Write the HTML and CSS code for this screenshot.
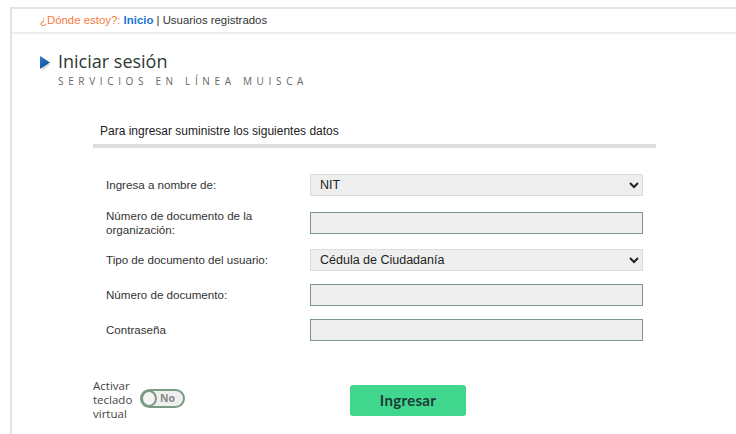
FILE: index.html
```html
<!DOCTYPE html>
<html lang="es">
<head>
  <meta charset="UTF-8" />
  <meta name="viewport" content="width=device-width, initial-scale=1.0" />
  <title>Iniciar sesión | Servicios en línea MUISCA</title>
  <link rel="stylesheet" href="styles.css">
</head>
<body>

<div class="frame">
  <div class="crumbs">
    <span class="where">¿Dónde estoy?:</span>
    <a href="#" class="home">Inicio</a> | Usuarios registrados
  </div>

  <div class="content">
    <div class="heading">
      <svg class="arrow" width="12" height="17" viewBox="0 0 12 17">
        <defs>
          <linearGradient id="ag" x1="0" y1="0" x2="1" y2="1">
            <stop offset="0" stop-color="#2a7fd0"/>
            <stop offset="1" stop-color="#0b3f86"/>
          </linearGradient>
        </defs>
        <polygon points="2,5 10,9.5 2,16" fill="#cfcfcf" opacity="0.7"/>
        <polygon points="0,1 10,7.5 0,14" fill="url(#ag)"/>
      </svg>
      <div>
        <h1>Iniciar sesión</h1>
        <p class="sub">SERVICIOS EN LÍNEA MUISCA</p>
      </div>
    </div>

    <div class="form">
      <p class="intro">Para ingresar suministre los siguientes datos</p>
      <div class="rule"></div>

      <div class="rows">
        <label for="tipo">Ingresa a nombre de:</label>
        <select id="tipo"><option>NIT</option></select>

        <label for="nit">Número de documento de la organización:</label>
        <input type="text" id="nit">

        <label for="doc">Tipo de documento del usuario:</label>
        <select id="doc"><option>Cédula de Ciudadanía</option></select>

        <label for="num">Número de documento:</label>
        <input type="text" id="num">

        <label for="pass">Contraseña</label>
        <input type="password" id="pass">
      </div>
    </div>

    <div class="actions">
      <span class="kb-label">Activar teclado virtual</span>
      <span class="toggle"><span class="knob"></span>No</span>
      <button class="go">Ingresar</button>
    </div>
  </div>
</div>

</body>
</html>
```

FILE: styles.css
```css
body { margin: 0; background: #fff; font-family: "Liberation Sans", Arial, sans-serif; color: #333; }
.frame { margin: 7px 0 0 10px; border-top: 2px solid #e4e4e4; border-left: 2px solid #e4e4e4; height: 440px; }
.crumbs { height: 23px; line-height: 23px; padding-left: 28px; font-size: 11.4px; border-bottom: 2px solid #ececec; color: #333; }
.where { color: #f47a3c; }
.home { color: #1c74d6; font-weight: bold; text-decoration: none; }
.content { padding: 16px 0 0 28px; }
.heading { display: flex; align-items: flex-start; gap: 6px; }
.arrow { margin-top: 5px; }
h1 { margin: 0; font-family: "Open Sans", sans-serif; font-weight: normal; font-size: 18px; line-height: 22px; color: #2b3a33; }
.sub { margin: 2px 0 0 0; font-family: "Open Sans", sans-serif; font-size: 10px; letter-spacing: 4.65px; color: #666; }
.form { margin: 36px 0 0 53px; width: 563px; }
.intro { margin: 0 0 0 7px; font-size: 12px; line-height: 15px; color: #222; }
.rule { height: 4px; background: #dedede; margin-top: 5px; }
.rows { display: grid; grid-template-columns: 204px 1fr; row-gap: 13px; align-items: center; padding: 26px 13px 0; }
.rows label { font-size: 11.6px; line-height: 13.5px; color: #333; padding-right: 40px; }
select, input { font-family: "Liberation Sans", Arial, sans-serif; font-size: 12.5px; height: 22px; box-sizing: border-box; background: #eee; color: #222; width: 100%; margin: 0; }
select { border: 1px solid #dcdcdc; padding-left: 5px; }
input { border: 1px solid #7b978a; }
.actions { display: flex; align-items: center; margin: 38px 0 0 53px; }
.kb-label { width: 40px; font-family: "Open Sans", sans-serif; font-size: 11.5px; line-height: 14px; color: #444; }
.toggle { display: flex; align-items: center; gap: 3px; margin: 0 0 4px 7px; width: 45px; height: 19px; box-sizing: border-box; border: 2px solid #7b9a84; border-radius: 10px; background: #efefef; font-family: "Open Sans", sans-serif; font-weight: bold; font-size: 10.5px; color: #888; }
.knob { width: 16px; height: 17px; box-sizing: border-box; border: 2px solid #7b9a84; border-radius: 50%; background: #f4f4f4; margin-left: -1px; }
.go { margin-left: 165px; width: 116px; height: 31px; border: none; border-radius: 3px; background: #40d68d; color: #1d3b38; font-family: "Lato", sans-serif; font-weight: bold; font-size: 15px; letter-spacing: 0.3px; }
```
